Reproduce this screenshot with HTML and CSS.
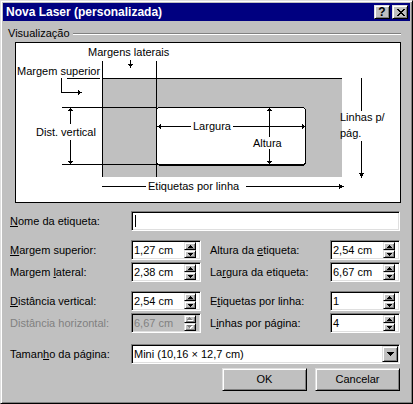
FILE: index.html
```html
<!DOCTYPE html>
<html>
<head>
<meta charset="utf-8">
<title>Nova Laser (personalizada)</title>
<link rel="stylesheet" href="styles.css">
</head>
<body>
<div class="window">
  <div class="titlebar">
    <span class="title">Nova Laser (personalizada)</span>
    <div class="tbtns">
      <span class="tbtn help">?</span>
      <span class="tbtn"><svg width="8" height="7" viewBox="0 0 8 7"><path d="M0 0h2v1H0zM6 0h2v1H6zM1 1h2v1H1zM5 1h2v1H5zM2 2h4v1H2zM3 3h2v1H3zM2 4h4v1H2zM1 5h2v1H1zM5 5h2v1H5zM0 6h2v1H0zM6 6h2v1H6z"/></svg></span>
    </div>
  </div>

  <div class="grouphead"><span>Visualização</span><span class="etch"></span></div>

  <div class="preview">
    <svg class="diagram" width="384" height="159" viewBox="16 43 384 159">
      <defs>
        <path id="au" d="M2 0h1v1H2zM1 1h3v1H1zM0 2h5v1H0z"/>
        <path id="ad" d="M0 0h5v1H0zM1 1h3v1H1zM2 2h1v1H2z"/>
        <path id="cd" d="M0 0h7v1H0zM1 1h5v1H1zM2 2h3v1H2zM3 3h1v1H3z"/>
      </defs>
      <rect x="102" y="78" width="240" height="99" fill="#c0c0c0"/>
      <rect x="156.5" y="107.5" width="149" height="57" rx="3" fill="#fff" stroke="#000"/>
      <path class="ln" d="M102 78.5H342M67 78.5H100M61.5 78V92.5H78M102.5 61V177M156.5 61V177M130.5 60V64M62 107.5H156M62 164.5H156M70.5 110V124M70.5 140V162M159 126.5H191M233 126.5H303M269.5 110V137M269.5 149V162M361.5 78V111M361.5 141V173M102 186.5H146M246 186.5H339"/>
      <rect x="159" y="164" width="145" height="2"/>
      <polygon points="128,64 133,64 130.5,68"/>
      <polygon points="78,90 78,95 82,92.5"/>
      <polygon points="68,111 73,111 70.5,107"/>
      <polygon points="68,161 73,161 70.5,165"/>
      <polygon points="161,124 161,129 157,126.5"/>
      <polygon points="302,124 302,129 306,126.5"/>
      <polygon points="267,111 272,111 269.5,107"/>
      <polygon points="267,161 272,161 269.5,165"/>
      <polygon points="359,173 364,173 361.5,178"/>
      <polygon points="339,184 339,189 344,186.5"/>
      <text x="88" y="56">Margens laterais</text>
      <text x="17" y="75">Margem superior</text>
      <text x="36" y="136">Dist. vertical</text>
      <text x="193" y="130">Largura</text>
      <text x="253" y="147">Altura</text>
      <text x="340" y="121">Linhas p/</text>
      <text x="340" y="137">pág.</text>
      <text x="148" y="190">Etiquetas por linha</text>
    </svg>
  </div>

  <div class="form">
    <div class="sec">
      <span class="lbl"><u>N</u>ome da etiqueta:</span>
      <span class="field wide"><span class="caret"></span></span>
    </div>

    <div class="sec">
      <span class="lbl"><u>M</u>argem superior:</span>
      <span class="spin"><span class="val">1,27 cm</span><span class="ud"><span class="sb"><svg width="5" height="3"><use href="#au"/></svg></span><span class="sb"><svg width="5" height="3"><use href="#ad"/></svg></span></span></span>
      <span class="lbl">Altura da <u>e</u>tiqueta:</span>
      <span class="spin"><span class="val">2,54 cm</span><span class="ud"><span class="sb"><svg width="5" height="3"><use href="#au"/></svg></span><span class="sb"><svg width="5" height="3"><use href="#ad"/></svg></span></span></span>

      <span class="lbl">Margem <u>l</u>ateral:</span>
      <span class="spin"><span class="val">2,38 cm</span><span class="ud"><span class="sb"><svg width="5" height="3"><use href="#au"/></svg></span><span class="sb"><svg width="5" height="3"><use href="#ad"/></svg></span></span></span>
      <span class="lbl">La<u>r</u>gura da etiqueta:</span>
      <span class="spin"><span class="val">6,67 cm</span><span class="ud"><span class="sb"><svg width="5" height="3"><use href="#au"/></svg></span><span class="sb"><svg width="5" height="3"><use href="#ad"/></svg></span></span></span>
    </div>

    <div class="sec">
      <span class="lbl"><u>D</u>istância vertical:</span>
      <span class="spin"><span class="val">2,54 cm</span><span class="ud"><span class="sb"><svg width="5" height="3"><use href="#au"/></svg></span><span class="sb"><svg width="5" height="3"><use href="#ad"/></svg></span></span></span>
      <span class="lbl">E<u>t</u>iquetas por linha:</span>
      <span class="spin"><span class="val">1</span><span class="ud"><span class="sb"><svg width="5" height="3"><use href="#au"/></svg></span><span class="sb"><svg width="5" height="3"><use href="#ad"/></svg></span></span></span>

      <span class="lbl dis">Distância horizontal:</span>
      <span class="spin dis"><span class="val">6,67 cm</span><span class="ud"><span class="sb"><svg width="6" height="4"><use href="#au" x="1" y="1" class="hl"/><use href="#au"/></svg></span><span class="sb"><svg width="6" height="4"><use href="#ad" x="1" y="1" class="hl"/><use href="#ad"/></svg></span></span></span>
      <span class="lbl">L<u>i</u>nhas por página:</span>
      <span class="spin"><span class="val">4</span><span class="ud"><span class="sb"><svg width="5" height="3"><use href="#au"/></svg></span><span class="sb"><svg width="5" height="3"><use href="#ad"/></svg></span></span></span>
    </div>

    <div class="sec last">
      <span class="lbl">Taman<u>h</u>o da página:</span>
      <span class="combo wide"><span class="val">Mini (10,16 × 12,7 cm)</span><span class="ddb"><svg width="7" height="4"><use href="#cd"/></svg></span></span>
    </div>
  </div>

  <div class="btnrow">
    <span class="btn">OK</span>
    <span class="btn">Cancelar</span>
  </div>
</div>
</body>
</html>
```

FILE: styles.css
```css
* { box-sizing: border-box; }

body {
  margin: 0;
  font-family: "Liberation Sans", Arial, sans-serif;
  font-size: 11px;
  line-height: 13px;
  color: #000;
  background: #c0c0c0;
}

.window {
  width: 413px;
  height: 404px;
  background: #c0c0c0;
  border: 1px solid;
  border-color: #dfdfdf #000 #000 #dfdfdf;
  box-shadow: inset 1px 1px #fff, inset -1px -1px #808080;
  padding: 2px;
  display: flex;
  flex-direction: column;
}

.titlebar {
  height: 18px;
  flex: none;
  background: #000080;
  color: #fff;
  display: flex;
  align-items: center;
  padding: 0 2px 0 3px;
}

.title {
  flex: 1;
  font-weight: bold;
  font-size: 12px;
  line-height: 18px;
  white-space: nowrap;
}

.tbtns {
  display: flex;
  gap: 2px;
}

.raised, .tbtn, .sb, .ddb, .btn {
  background: #c0c0c0;
  border: 1px solid;
  border-color: #dfdfdf #000 #000 #dfdfdf;
  box-shadow: inset 1px 1px #fff, inset -1px -1px #808080;
}

.tbtn {
  width: 16px;
  height: 14px;
  display: flex;
  align-items: center;
  justify-content: center;
  color: #000;
}

.tbtn svg { display: block; margin-left: 1px; }

.help {
  font-weight: bold;
  font-size: 12px;
  line-height: 12px;
}

.grouphead {
  display: flex;
  height: 13px;
  margin: 6px 9px 0 5px;
  white-space: nowrap;
}

.etch {
  flex: 1;
  height: 2px;
  margin: 6px 0 0 3px;
  border-top: 1px solid #808080;
  border-bottom: 1px solid #fff;
}

.preview {
  width: 386px;
  height: 161px;
  margin: 2px 0 0 12px;
  background: #fff;
  border: 1px solid #000;
}

.diagram {
  display: block;
  shape-rendering: crispEdges;
  font-family: "Liberation Sans", Arial, sans-serif;
  font-size: 11px;
}

.diagram text { shape-rendering: auto; }

.ln {
  fill: none;
  stroke: #000;
  stroke-width: 1;
}

.form {
  margin: 8px 0 0 7px;
}

.sec {
  display: grid;
  grid-template-columns: 121px 79px 120px 70px;
  row-gap: 2px;
  align-items: center;
  margin-top: 9px;
}

.sec:first-child { margin-top: 0; }
.sec.last { margin-top: 11px; }

.lbl {
  white-space: nowrap;
  line-height: 13px;
}

.lbl.dis { color: #808080; }

.field, .spin, .combo {
  height: 20px;
  background: #fff;
  border: 1px solid;
  border-color: #808080 #fff #fff #808080;
  box-shadow: inset 1px 1px #000, inset -1px -1px #dfdfdf;
  padding: 1px;
  display: flex;
  align-items: center;
}

.wide { grid-column: 2 / -1; }

.caret {
  width: 1px;
  height: 12px;
  margin-left: 2px;
  background: #000;
}

.spin {
  width: 70px;
  padding-right: 4px;
}

.val {
  flex: 1;
  padding-left: 1px;
  line-height: 16px;
  white-space: nowrap;
}

.ud {
  width: 12px;
  height: 16px;
  display: flex;
  flex-direction: column;
}

.sb {
  height: 8px;
  display: flex;
  align-items: center;
  justify-content: center;
}

.sb svg, .ddb svg { display: block; }

.spin.dis { background: #c0c0c0; }
.spin.dis .val { color: #808080; }
.spin.dis svg { fill: #808080; }
.spin.dis .hl { fill: #fff; }

.ddb {
  width: 16px;
  height: 16px;
  display: flex;
  align-items: center;
  justify-content: center;
}

.btnrow {
  display: flex;
  justify-content: flex-end;
  gap: 8px;
  margin: 4px 10px 0 0;
}

.btn {
  width: 85px;
  height: 23px;
  display: flex;
  align-items: center;
  justify-content: center;
}
```
